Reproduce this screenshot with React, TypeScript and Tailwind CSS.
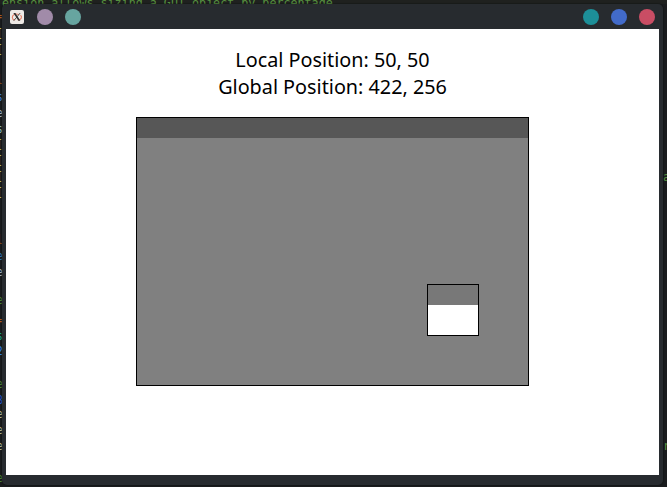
const edgeLines = [
  { top: 8, char: '=', tone: 'text-[#b85b20]' },
  { top: 26, char: '[', tone: 'text-[#b5bd68]' },
  { top: 42, char: '[', tone: 'text-[#b5bd68]' },
  { top: 72, char: 'l', tone: 'text-[#8a4a1c]' },
  { top: 89, char: 's', tone: 'text-[#3f7fd0]' },
  { top: 105, char: 'e', tone: 'text-[#a8b4bd]' },
  { top: 121, char: 's', tone: 'text-[#8fb9b0]' },
  { top: 137, char: '[', tone: 'text-[#b5bd68]' },
  { top: 153, char: '[', tone: 'text-[#b5bd68]' },
  { top: 169, char: '[', tone: 'text-[#b5bd68]' },
  { top: 185, char: '[', tone: 'text-[#b5bd68]' },
  { top: 232, char: 'l', tone: 'text-[#8a4a1c]' },
  { top: 248, char: 'e', tone: 'text-[#2f78b0]' },
  { top: 264, char: 'e', tone: 'text-[#a8b4bd]' },
  { top: 292, char: 'e', tone: 'text-[#4d8534]' },
  { top: 312, char: '=', tone: 'text-[#b85b20]' },
  { top: 328, char: 's', tone: 'text-[#1ca07c]' },
  { top: 343, char: '2', tone: 'text-[#3486e0]' },
  { top: 376, char: 'e', tone: 'text-[#4d8534]' },
  { top: 392, char: 'B', tone: 'text-[#245bd0]' },
  { top: 406, char: 'e', tone: 'text-[#b8b58c]' },
  { top: 422, char: 'e', tone: 'text-[#b8b58c]' },
  { top: 438, char: 'e', tone: 'text-[#b8b58c]' },
  { top: 470, char: 'e', tone: 'text-[#4d8534]' },
];

function EditorBackdrop() {
  return (
    <div className="absolute inset-0 overflow-hidden bg-[#1a1c1e] font-['DejaVu_Sans_Mono',monospace] text-[11.7px] leading-[16px]">
      <div className="absolute top-0 left-0 h-1 w-full bg-[#1f211f]" />
      <div className="absolute top-[-5px] left-[2px] whitespace-pre text-[#579140]">
        ension allows sizing a GUI object by percentage
      </div>
      {edgeLines.map((line) => (
        <span
          key={line.top}
          className={`absolute left-[-4px] ${line.tone}`}
          style={{ top: line.top }}
        >
          {line.char}
        </span>
      ))}
      <span className="absolute top-[169px] left-[663px] text-[#579140]">a</span>
      <span className="absolute top-[438px] left-[663px] text-[#579140]">r</span>
    </div>
  );
}

function XorgIcon() {
  return (
    <svg width="14" height="14" viewBox="0 0 14 14" className="block">
      <rect width="14" height="14" rx="2" fill="#eeeae6" />
      <path d="M8.8 4.6C5.5 3 2.2 5.2 2.3 7.4c.1 1.5 1.3 2.4 2.5 2.6M10.5 5.2c2 2 .9 4.8-2.8 4.8" fill="none" stroke="#e47f66" strokeWidth="1.1" />
      <path d="M3.4 3h2l5 7.8H8.4z" fill="#303030" />
      <path d="M10.2 3 3.7 10.8" stroke="#303030" strokeWidth="0.8" />
    </svg>
  );
}

function TitleBar() {
  return (
    <header className="flex h-[25px] items-center justify-between pr-[8px] pl-[8px]">
      <div className="flex items-center gap-3">
        <div className="mr-[1px]"><XorgIcon /></div>
        <span className="size-4 rounded-full bg-[#a18ba9]" />
        <span className="size-4 rounded-full bg-[#67a5a0]" />
      </div>
      <div className="flex items-center gap-3">
        <span className="size-4 rounded-full bg-[#1d8f98]" />
        <span className="size-4 rounded-full bg-[#426bca]" />
        <span className="size-4 rounded-full bg-[#c94d64]" />
      </div>
    </header>
  );
}

export default function App() {
  return (
    <div className="relative h-[487px] w-[667px] overflow-hidden pt-1 pl-[2px]">
      <EditorBackdrop />
      <div className="relative h-[481px] w-[661px] rounded-[5px] bg-[#272b2f] shadow-[0_0_1px_1px_rgba(10,12,14,0.3)]">
        <TitleBar />
        <main className="mx-1 flex h-[446px] flex-col bg-white">
          <div className="pt-[17px] text-center font-['Noto_Sans',sans-serif] text-[19.8px] leading-[27px] text-black">
            <p>Local Position: 50, 50</p>
            <p>Global Position: 422, 256</p>
          </div>
          <div className="mt-[17px] ml-[130px] flex h-[269px] w-[393px] flex-col border border-black bg-[#808080]">
            <div className="h-5 w-full bg-[#575757]" />
            <div className="mt-[146px] ml-[290px] h-[52px] w-[52px] border border-black bg-white">
              <div className="h-5 bg-[#787878]" />
            </div>
          </div>
        </main>
      </div>
    </div>
  );
}
